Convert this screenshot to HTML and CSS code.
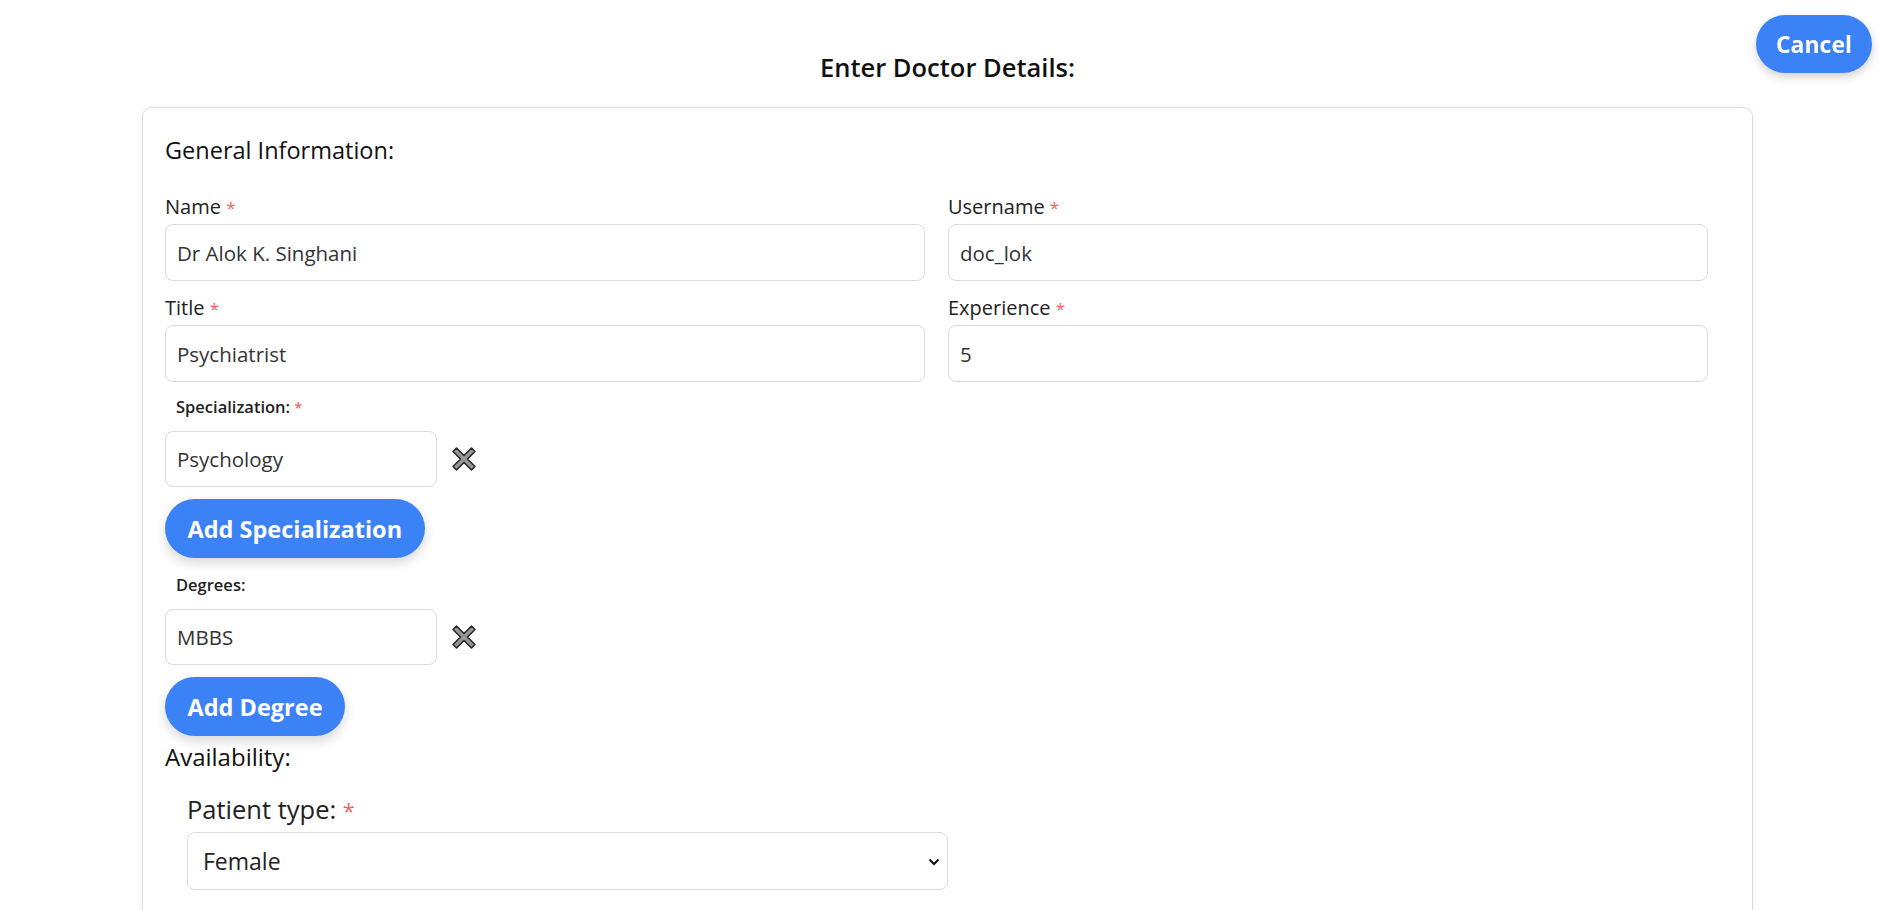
FILE: index.html
```html
<!DOCTYPE html>
<html lang="en">
<head>
<meta charset="utf-8">
<title>Enter Doctor Details</title>
<link rel="stylesheet" href="styles.css">
</head>
<body>
<button class="cancel-btn" type="button">Cancel</button>
<div class="page">
  <h1 class="page-title">Enter Doctor Details:</h1>
  <form class="card">
    <h2 class="section-title">General Information:</h2>
    <div class="grid">
      <div class="field">
        <label class="label">Name <span class="req">*</span></label>
        <input class="input" type="text" value="Dr Alok K. Singhani">
      </div>
      <div class="field">
        <label class="label">Username <span class="req">*</span></label>
        <input class="input" type="text" value="doc_lok">
      </div>
      <div class="field">
        <label class="label">Title <span class="req">*</span></label>
        <input class="input" type="text" value="Psychiatrist">
      </div>
      <div class="field">
        <label class="label">Experience <span class="req">*</span></label>
        <input class="input" type="text" value="5">
      </div>
    </div>

    <div class="list spec-list">
      <div class="sub-label">Specialization: <span class="req">*</span></div>
      <div class="list-row">
        <input class="input small" type="text" value="Psychology">
        <button class="remove-btn" type="button" aria-label="Remove">
          <svg width="26" height="26" viewBox="0 0 26 26"><path d="M2 5.5 5.5 2 13 9.5 20.5 2 24 5.5 16.5 13 24 20.5 20.5 24 13 16.5 5.5 24 2 20.5 9.5 13Z" fill="#969696" stroke="#2a2a2a" stroke-width="1.6" stroke-linejoin="round"/></svg>
        </button>
      </div>
      <button class="pill-btn" type="button">Add Specialization</button>
    </div>

    <div class="list deg-list">
      <div class="sub-label">Degrees:</div>
      <div class="list-row">
        <input class="input small" type="text" value="MBBS">
        <button class="remove-btn" type="button" aria-label="Remove">
          <svg width="26" height="26" viewBox="0 0 26 26"><path d="M2 5.5 5.5 2 13 9.5 20.5 2 24 5.5 16.5 13 24 20.5 20.5 24 13 16.5 5.5 24 2 20.5 9.5 13Z" fill="#969696" stroke="#2a2a2a" stroke-width="1.6" stroke-linejoin="round"/></svg>
        </button>
      </div>
      <button class="pill-btn" type="button">Add Degree</button>
    </div>

    <h3 class="avail-title">Availability:</h3>
    <div class="avail">
      <label class="big-label">Patient type: <span class="req">*</span></label>
      <div class="select-wrap">
        <select class="select">
          <option>Female</option>
          <option>Male</option>
          <option>Any</option>
        </select>
        <svg class="chevron" width="12" height="8" viewBox="0 0 12 8"><path d="M1.5 1.5 6 6 10.5 1.5" fill="none" stroke="#111" stroke-width="2"/></svg>
      </div>
    </div>
  </form>
</div>
</body>
</html>
```

FILE: styles.css
```css
html, body {
  margin: 0;
  padding: 0;
  height: 910px;
  overflow: hidden;
  background: #ffffff;
}

body {
  font-family: "Open Sans", "Noto Sans", Arial, sans-serif;
  color: #1f1f1f;
}

.page {
  margin: 0 127px 0 142px;
  padding-top: 49px;
}

.page-title {
  margin: 0 0 22px;
  text-align: center;
  font-size: 25.5px;
  line-height: 36px;
  font-weight: 600;
  color: #111;
}

.cancel-btn {
  position: fixed;
  top: 15px;
  right: 8px;
  width: 116px;
  height: 58px;
  border: none;
  border-radius: 29px;
  background: #3b82f6;
  color: #fff;
  font-family: inherit;
  font-size: 23px;
  font-weight: 700;
  box-shadow: 0 4px 10px rgba(0, 0, 0, 0.18);
}

.card {
  display: block;
  border: 1px solid #dcdcdc;
  border-radius: 10px;
  box-shadow: 0 1px 6px rgba(0, 0, 0, 0.07);
  padding: 27px 44px 120px 22px;
}

.section-title {
  margin: 0 0 29px;
  font-size: 23.5px;
  line-height: 30px;
  font-weight: 500;
  color: #111;
}

.grid {
  display: grid;
  grid-template-columns: 1fr 1fr;
  column-gap: 23px;
  row-gap: 14px;
}

.field {
  display: flex;
  flex-direction: column;
}

.label {
  font-size: 20px;
  line-height: 26px;
  margin-bottom: 3px;
  color: #222;
}

.req {
  color: #ef6464;
  font-size: 0.85em;
}

.input {
  box-sizing: border-box;
  height: 57px;
  padding: 0 11px;
  border: 1px solid #d9d9de;
  border-radius: 8px;
  font-family: inherit;
  font-size: 20.5px;
  color: #333;
  background: #fff;
  outline: none;
}

.input.small {
  width: 272px;
  height: 56px;
}

.list {
  display: flex;
  flex-direction: column;
  align-items: flex-start;
}

.spec-list {
  margin-top: 14px;
}

.deg-list {
  margin-top: 16px;
}

.sub-label {
  margin-left: 11px;
  font-size: 16.5px;
  line-height: 22px;
  font-weight: 600;
  color: #222;
  margin-bottom: 12px;
}

.deg-list .sub-label {
  margin-bottom: 13px;
}

.list-row {
  display: flex;
  align-items: center;
  gap: 14px;
}

.remove-btn {
  display: flex;
  padding: 0;
  border: none;
  background: none;
  width: 26px;
  height: 26px;
}

.pill-btn {
  margin-top: 12px;
  height: 59px;
  padding: 0 22.5px;
  border: none;
  border-radius: 30px;
  background: #3b82f6;
  color: #fff;
  font-family: inherit;
  font-size: 23.5px;
  font-weight: 700;
  box-shadow: 0 5px 12px rgba(0, 0, 0, 0.16);
}

.deg-list .pill-btn {
  margin-top: 12px;
}

.avail-title {
  margin: 7px 0 0;
  font-size: 24px;
  line-height: 28px;
  font-weight: 500;
  color: #111;
}

.avail {
  margin-top: 23px;
  padding-left: 22px;
  display: flex;
  flex-direction: column;
}

.big-label {
  font-size: 25.5px;
  line-height: 30px;
  margin-bottom: 6px;
  color: #222;
}

.select-wrap {
  position: relative;
  width: 761px;
}

.select {
  box-sizing: border-box;
  width: 100%;
  height: 58px;
  padding: 0 40px 0 15px;
  border: 1px solid #d9d9de;
  border-radius: 8px;
  background: #fff;
  font-family: inherit;
  font-size: 23px;
  color: #222;
  appearance: none;
  -webkit-appearance: none;
  outline: none;
}

.chevron {
  position: absolute;
  right: 8px;
  top: 26px;
  pointer-events: none;
}
```
